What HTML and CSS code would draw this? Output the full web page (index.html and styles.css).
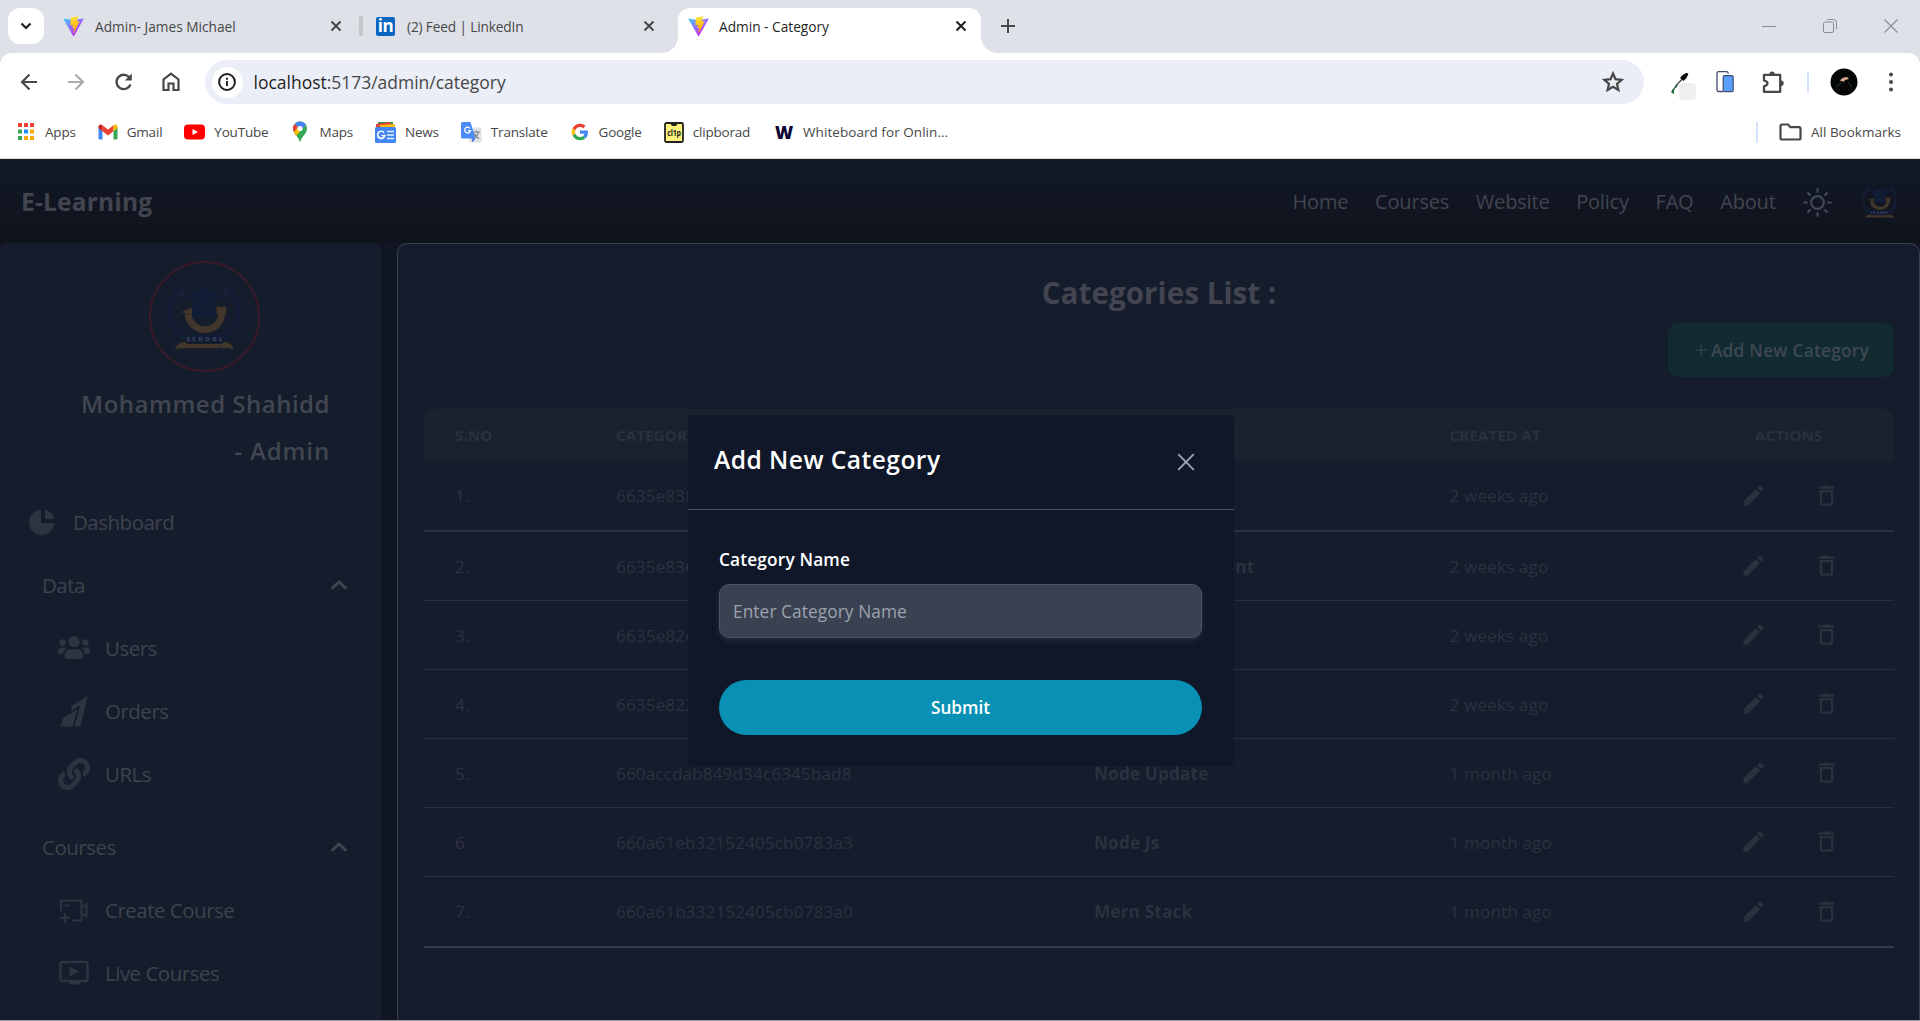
FILE: index.html
```html
<!DOCTYPE html>
<html lang="en">
<head>
<meta charset="utf-8">
<title>Admin - Category</title>
<link rel="stylesheet" href="styles.css">
</head>
<body>
<svg class="defs" width="0" height="0" aria-hidden="true">
  <defs>
    <linearGradient id="vg1" x1="6" y1="33" x2="235" y2="344" gradientUnits="userSpaceOnUse"><stop stop-color="#41d1ff"/><stop offset="1" stop-color="#bd34fe"/></linearGradient>
    <linearGradient id="vg2" x1="194" y1="9" x2="236" y2="293" gradientUnits="userSpaceOnUse"><stop stop-color="#ffea83"/><stop offset=".083" stop-color="#ffdd35"/><stop offset="1" stop-color="#ffa800"/></linearGradient>
  </defs>
  <symbol id="vite" viewBox="0 0 410 404">
    <path fill="url(#vg1)" d="M399.6 59.5L215.6 388.5c-3.8 6.8-13.5 6.8-17.4.1L10.6 59.6C6.400 52.300 12.700 43.400 21 44.900l184.200 32.900c1.200.2 2.400.2 3.500 0l180.300-32.900c8.300-1.500 14.600 7.300 10.600 14.600z"/>
    <path fill="url(#vg2)" d="M293 1.600L156.800 28.300c-2.200.4-3.900 2.300-4 4.600l-8.400 141.500c-.2 3.300 2.900 5.900 6.100 5.200l37.900-8.700c3.600-.8 6.800 2.300 6 5.900l-11.300 55.200c-.8 3.700 2.700 6.900 6.300 5.800l23.400-7.100c3.600-1.100 7.100 2.100 6.300 5.800L201.200 323c-1.100 5.400 6.100 8.400 9.100 3.700l2-3.100L323.200 102.400c1.900-3.700-1.300-7.900-5.400-7.100l-39 7.500c-3.700.7-6.800-2.700-5.800-6.300L298.500 8.300c1-3.600-2-7-5.500-6.700z"/>
  </symbol>
  <symbol id="close" viewBox="0 0 12 12"><path d="M1.500 1.500l9 9M10.500 1.500l-9 9" stroke="currentColor" stroke-width="2" fill="none"/></symbol>
  <symbol id="chev" viewBox="0 0 16 10"><path d="M1.500 8L8 1.800 14.500 8" stroke="currentColor" stroke-width="3" stroke-linecap="round" stroke-linejoin="round" fill="none"/></symbol>
  <symbol id="pencil" viewBox="0 0 24 24"><path fill="currentColor" d="M3 17.250V21h3.750L17.810 9.940l-3.750-3.750L3 17.250zM20.710 7.040a1 1 0 0 0 0-1.410l-2.340-2.340a1 1 0 0 0-1.410 0l-1.830 1.830 3.750 3.750 1.830-1.830z"/></symbol>
  <symbol id="trash" viewBox="0 0 24 24"><path fill="currentColor" d="M6 19c0 1.100.9 2 2 2h8c1.100 0 2-.9 2-2V7H6v12zM8 9h8v10H8V9zm7.500-5l-1-1h-5l-1 1H5v2h14V4z"/></symbol>
</svg>

<div class="browser">
  <div class="tabstrip">
    <div class="tabsearch"><svg width="12" height="8" viewBox="0 0 12 8"><path d="M1.500 1.500L6 6l4.500-4.500" stroke="#1f1f1f" stroke-width="2.200" fill="none"/></svg></div>
    <div class="tab tab-first"><svg width="21" height="21"><use href="#vite"/></svg><span>Admin- James Michael</span><svg class="x" width="12" height="12"><use href="#close"/></svg></div>
    <div class="tabsep"></div>
    <div class="tab tab-second"><div class="linkedin">in</div><span class="tight">(2) Feed | LinkedIn</span><svg class="x" width="12" height="12"><use href="#close"/></svg></div>
    <div class="tab tab-active"><svg width="21" height="21"><use href="#vite"/></svg><span>Admin - Category</span><svg class="x" width="12" height="12"><use href="#close"/></svg></div>
    <svg class="newtab" width="14" height="14" viewBox="0 0 14 14"><path d="M7 0v14M0 7h14" stroke="#474747" stroke-width="2"/></svg>
    <div class="winctl">
      <svg width="14" height="14" viewBox="0 0 14 14"><path d="M0 7.500h14" stroke="#888c91" stroke-width="1"/></svg>
      <svg width="14" height="14" viewBox="0 0 14 14"><path d="M.5 4.500a1.500 1.500 0 0 1 1.500-1.500h7a1.500 1.500 0 0 1 1.500 1.500v7.500a1.500 1.500 0 0 1-1.500 1.500H2A1.500 1.500 0 0 1 .5 12zM4 .5h6.500a3 3 0 0 1 3 3V10" fill="none" stroke="#888c91"/></svg>
      <svg width="14" height="14" viewBox="0 0 14 14"><path d="M.5.5l13 13M13.500.5l-13 13" stroke="#888c91" stroke-width="1.100"/></svg>
    </div>
  </div>
  <div class="toolbar">
    <svg class="tool" width="20" height="20" viewBox="0 0 20 20"><path d="M18 10H3M10.500 2.500L3 10l7.500 7.500" stroke="#474747" stroke-width="2.100" fill="none"/></svg>
    <svg class="tool" width="20" height="20" viewBox="0 0 20 20"><path d="M2 10h15M9.500 2.500L17 10l-7.500 7.500" stroke="#ababab" stroke-width="2.100" fill="none"/></svg>
    <svg class="tool" width="20" height="20" viewBox="0 0 20 20"><path d="M16.500 12.500A7.200 7.200 0 1 1 15.800 6" stroke="#474747" stroke-width="2.300" fill="none"/><path d="M17.800 1.500v7h-7z" fill="#474747"/></svg>
    <svg class="tool" width="20" height="20" viewBox="0 0 20 20"><path d="M2.500 18V7.500L10 1.700l7.500 5.800V18h-5v-6.500h-5V18z" stroke="#474747" stroke-width="2.200" fill="none"/></svg>
    <div class="omnibox">
      <div class="info"><svg width="18" height="18" viewBox="0 0 18 18"><circle cx="9" cy="9" r="7.900" fill="none" stroke="#1f1f1f" stroke-width="2"/><path d="M9 8v5M9 4.800v2" stroke="#1f1f1f" stroke-width="1.900"/></svg></div>
      <span class="url"><b>localhost</b>:5173/admin/category</span>
      <svg width="22" height="22" viewBox="0 0 22 22"><path d="M11 2.500l2.500 5.700 6.200.6-4.700 4.100 1.400 6.100L11 15.800 5.600 19 7 12.900 2.300 8.800l6.200-.6z" fill="none" stroke="#474747" stroke-width="2.200"/></svg>
    </div>
    <div class="exts">
      <svg width="28" height="28" viewBox="0 0 28 28"><path d="M2.500 20C5 14 9 10 12.500 7" stroke="#46514a" stroke-width="1.500" fill="none"/><path d="M1.500 19q2-4 2.500 0t-1.500 2.500-1-2.500zM5 14l3-1.500-1.500 3.500z" fill="#17713a"/><path d="M10 6l2-2.500 4-2.500q3-.5 2 2l-2 3.500-2.500 2.500z" fill="#0b0b0b"/><rect x="9" y="11" width="17" height="17" rx="4" fill="#efefef"/></svg>
      <svg width="18" height="22" viewBox="0 0 18 22"><path d="M1 2.500q0-1.800 1.500-1.800h8q1.500 0 2 2M1 2v17q0 1.500 1.500 1.500H7" fill="none" stroke="#414d70" stroke-width="1.300"/><rect x="7.200" y="4.700" width="10" height="16" rx="1.500" fill="#5a9ffb" stroke="#414d70" stroke-width="1.200"/></svg>
      <svg width="23" height="23" viewBox="0 0 23 23"><path d="M2 3.800h16.200v17H2v-5.500q3.500-1 3.500-3t-3.500-3z" fill="none" stroke="#474747" stroke-width="2.300" stroke-linejoin="round"/><path d="M7.500 3a2.600 2.600 0 0 1 5.200 0zM19 9.500a2.700 2.700 0 0 1 0 5.400z" fill="#474747"/></svg>
      <i class="vbar"></i>
      <svg width="28" height="28" viewBox="0 0 28 28"><circle cx="14" cy="14" r="13.500" fill="#050606"/><path d="M10 13c1-3 4-4 7-4l2 2-4 1-1 2-2-1z" fill="#d9a58b"/><path d="M6 19l6-5M22 19l-4-5" stroke="#17201e" stroke-width="2"/></svg>
      <svg width="4" height="20" viewBox="0 0 4 20"><circle cx="2" cy="2.500" r="2" fill="#474747"/><circle cx="2" cy="10" r="2" fill="#474747"/><circle cx="2" cy="17.500" r="2" fill="#474747"/></svg>
    </div>
  </div>
  <div class="bookmarks">
    <div class="bm"><svg width="20" height="20" viewBox="0 0 20 20"><path d="M2 1h4v4H2zM8 1h4v4H8zM14 1h4v4h-4z" fill="#ea4335"/><path d="M2 7.500h4v4H2z" fill="#34a853"/><path d="M8 7.500h4v4H8z" fill="#1a8cf0"/><path d="M14 7.500h4v4h-4zM8 14h4v4H8zM14 14h4v4h-4z" fill="#fbab05"/><path d="M2 14h4v4H2z" fill="#34a853"/></svg><span>Apps</span></div>
    <div class="bm"><svg width="20" height="20" viewBox="0 0 20 20"><path d="M.5 5v11.500a1 1 0 0 0 1 1h3V9z" fill="#4285f4"/><path d="M19.500 5v11.500a1 1 0 0 1-1 1h-3V9z" fill="#34a853"/><path d="M.5 5c0-2.500 2-3.300 4-1.800V9.500L.5 6z" fill="#c5221f"/><path d="M4.500 3.200L10 7.500l5.500-4.300v6L10 13.500 4.500 9.300z" fill="#ea4335"/><path d="M19.500 5c0-2.500-2-3.300-4-1.800v6L19.500 6z" fill="#fbbc04"/></svg><span>Gmail</span></div>
    <div class="bm"><svg width="21" height="20" viewBox="0 0 21 20"><rect y="2.500" width="21" height="15" rx="4" fill="#f00"/><path d="M8.500 7l5.500 3-5.500 3z" fill="#fff"/></svg><span>YouTube</span></div>
    <div class="bm"><svg width="20" height="22" viewBox="0 0 20 22"><path d="M10 .5a7 7 0 0 0-7 7c0 5.500 5.500 7.500 7 14 1.500-6.500 7-8.500 7-14a7 7 0 0 0-7-7z" fill="#34a853"/><path d="M10 .5a7 7 0 0 1 6 3.400L6 15 4.300 11.500A9 9 0 0 1 3 7.500a7 7 0 0 1 7-7z" fill="#fbbc04"/><path d="M4.600 3l3.500 3-4 5A7 7 0 0 1 4.600 3z" fill="#ea4335"/><path d="M4.600 3A7 7 0 0 1 16 3.900L12 8.500 8 6z" fill="#4285f4"/><circle cx="10" cy="7.500" r="2.600" fill="#fff"/></svg><span>Maps</span></div>
    <div class="bm"><svg width="21" height="21" viewBox="0 0 21 21"><path d="M3 0h15v6H3z" fill="#21974c"/><path d="M1 2l14-2 2 6H1z" fill="#ea4335"/><path d="M5 3l15-1v5H5z" fill="#fbbc04"/><rect y="5" width="21" height="16" rx="1.500" fill="#4285f4"/><path d="M12 9.500h7M12 13h7M12 16.500h7" stroke="#e8f0fe" stroke-width="1.700"/><path d="M9 10.500a3.600 3.600 0 1 0 .8 3H6.500" stroke="#fff" stroke-width="1.700" fill="none"/></svg><span>News</span></div>
    <div class="bm"><svg width="21" height="21" viewBox="0 0 21 21"><rect x="8" y="5.500" width="12.500" height="15" rx="1.500" fill="#dfe1e5"/><path d="M11 20.500l3.500-4-3-1z" fill="#3367d6"/><path d="M12 10h7M15.500 8.500V10M17.500 10c-.5 3-3 5-5 6M13.500 11.500c.5 2 2.500 4 4.500 5" stroke="#7c8186" stroke-width="1.200" fill="none"/><path d="M1.500 0h8l5 16.500h-13A1.500 1.500 0 0 1 0 15V1.500A1.500 1.500 0 0 1 1.500 0z" fill="#4c8bf5"/><path d="M9 6.300a2.900 2.900 0 1 0 .5 2.300H7" stroke="#fff" stroke-width="1.300" fill="none"/></svg><span>Translate</span></div>
    <div class="bm"><svg width="20" height="18" viewBox="-4 -2 56 52"><path fill="#EA4335" d="M24 9.500c3.540 0 6.710 1.220 9.210 3.600l6.850-6.850C35.900 2.380 30.470 0 24 0 14.620 0 6.510 5.380 2.560 13.220l7.980 6.190C12.430 13.720 17.740 9.500 24 9.500z"/><path fill="#4285F4" d="M46.980 24.550c0-1.570-.15-3.090-.38-4.550H24v9.020h12.940c-.58 2.960-2.260 5.480-4.780 7.180l7.730 6c4.510-4.180 7.090-10.360 7.090-17.650z"/><path fill="#FBBC05" d="M10.530 28.590c-.48-1.450-.76-2.990-.76-4.590s.27-3.140.76-4.590l-7.980-6.190C.92 16.460 0 20.120 0 24c0 3.880.92 7.540 2.560 10.780l7.970-6.190z"/><path fill="#34A853" d="M24 48c6.480 0 11.930-2.130 15.890-5.810l-7.730-6c-2.150 1.450-4.920 2.300-8.160 2.300-6.260 0-11.570-4.220-13.470-9.910l-7.980 6.190C6.510 42.620 14.620 48 24 48z"/></svg><span>Google</span></div>
    <div class="bm"><svg width="20" height="21" viewBox="0 0 20 21"><rect x="1" y="1" width="18" height="19" rx="1.500" fill="#fdf37c" stroke="#222" stroke-width="1.800"/><path d="M6 1h8l-2 3H8z" fill="#222"/><text x="3.300" y="14" font-size="8.500" font-weight="700" textLength="13.500" lengthAdjust="spacingAndGlyphs" fill="#222" font-family="Open Sans">cl1p</text></svg><span>clipborad</span></div>
    <div class="bm"><div class="wicon">W</div><span class="wide">Whiteboard for Onlin...</span></div>
    <div class="allbm"><i class="vbar"></i><svg width="23" height="18" viewBox="0 0 23 18"><path d="M1.500 15V3a1.500 1.500 0 0 1 1.500-1.500h6l2.500 2.700H20A1.500 1.500 0 0 1 21.500 5.700V15a1.500 1.500 0 0 1-1.500 1.500H3A1.500 1.500 0 0 1 1.500 15z" fill="none" stroke="#474747" stroke-width="2.200"/></svg><span>All Bookmarks</span></div>
  </div>
</div>

<div class="page">
  <header class="top">
    <div class="brand">E-Learning</div>
    <nav class="topnav">
      <a>Home</a><a>Courses</a><a>Website</a><a>Policy</a><a>FAQ</a><a>About</a>
      <svg class="sun" width="29" height="29" viewBox="0 0 29 29"><g fill="none" stroke="#42475a" stroke-width="2.200" stroke-linecap="round"><circle cx="14.500" cy="14.500" r="6.300"/><path d="M14.500 1.200v2.600M14.500 25.200v2.600M1.200 14.500h2.600M25.200 14.500h2.600M5.100 5.100l1.800 1.800M22.100 22.100l1.800 1.800M5.100 23.900l1.800-1.800M22.100 6.900l1.800-1.800"/></g></svg>
      <svg class="minilogo" width="33" height="38" viewBox="20 12 70 82" preserveAspectRatio="none"><use href="#school"/></svg>
    </nav>
  </header>
  <div class="body">
    <aside class="side">
      <div class="avatar"><svg width="106" height="106" viewBox="0 0 110 110"><g id="school">
        <path d="M33 24C14 38 16 66 34 78M77 24C96 38 94 66 76 78" fill="none" stroke="#131c32" stroke-width="7"/>
        <path d="M55 25L76 36 55 46 34 36zM42 41v16h25V41L55 47z" fill="#111c35"/>
        <path d="M44 47h23M44 51h23M44 55h23" stroke="#16223b" stroke-width="1"/>
        <path d="M38.500 52.500C40 75 74 75 73.500 50" fill="none" stroke="#43372c" stroke-width="7"/>
        <path d="M31 51l11.500-4.500v6.500zM68 45.500h10v7H68z" fill="#43372c"/>
        <path d="M36 75h39v7H36z" fill="#111c35"/>
        <path d="M25 90c1-5 5-7.500 10-8l3 2h35l3-2c5 .5 9 3 10 8l-3-1.500H28z" fill="#43372c"/>
        <text x="37" y="80.500" font-size="5.500" font-weight="700" textLength="37" fill="#485369" font-family="Open Sans">SCHOOL</text>
        <circle cx="31.500" cy="31" r="2.500" fill="none" stroke="#222d3e"/><circle cx="78.500" cy="31" r="2.500" fill="none" stroke="#222d3e"/>
        <path d="M14 48l14-13M35 25l14-12M80 29l8-7M62 48l14-13M83 74l12-11M61 97l13-12M20 90l18-18" stroke="#1a2333" stroke-width="1.500" stroke-dasharray="2 1"/>
      </g></svg></div>
      <div class="who">Mohammed Shahidd</div>
      <div class="who role">- Admin</div>
      <div class="menu">
        <div class="mi top-item"><svg width="26" height="26" viewBox="0 0 26 26"><path d="M12 .8V14h13.200A12.600 12.600 0 1 1 12 .8z" fill="currentColor"/><path d="M16 .8a11 11 0 0 1 9.300 9.300H16z" fill="currentColor"/></svg><span>Dashboard</span></div>
        <div class="mi group"><span>Data</span><svg width="16" height="10"><use href="#chev"/></svg></div>
        <div class="mi sub"><svg width="32" height="32" viewBox="0 0 640 512"><g fill="currentColor"><circle cx="320" cy="130" r="112"/><circle cx="92" cy="145" r="66"/><circle cx="548" cy="145" r="66"/><path d="M128 430c0-80 40-148 115-155q77 28 154 0c75 7 115 75 115 155q0 45-45 45H173q-45 0-45-45zM0 325c0-50 30-77 80-77h50q25 0 38 8-60 50-65 120H30q-30 0-30-30zM640 325c0-50-30-77-80-77h-50q-25 0-38 8 60 50 65 120h73q30 0 30-30z"/></g></svg><span>Users</span></div>
        <div class="mi sub"><svg width="32" height="32" viewBox="0 0 32 32"><path d="M29.800.8L22.500 31.500H16.500L21 12 12.500 16.500 14 10.500z" fill="currentColor"/><path d="M20 13.500L15 31.500H2.500L5 23z" fill="currentColor"/><path d="M22 11.500L11 18.500M20.500 13.500L15.500 32" stroke="#151c2b" stroke-width="1.500"/></svg><span>Orders</span></div>
        <div class="mi sub"><svg width="32" height="32" viewBox="0 0 512 512"><path fill="currentColor" d="M326.600 185.400c59.700 59.800 58.900 155.700.4 214.600-.1.100-.2.300-.4.400l-67.200 67.200c-59.300 59.300-155.700 59.300-215 0-59.300-59.300-59.300-155.700 0-215l37.100-37.100c9.800-9.800 26.800-3.300 27.300 10.600.6 17.700 3.800 35.500 9.700 52.700 2 5.800.6 12.300-3.800 16.600l-13.100 13.100c-28 28-28.900 73.700-1.200 102 28 28.600 74.100 28.700 102.300.5l67.200-67.200c28.200-28.200 28.100-73.800 0-101.800-3.700-3.700-7.400-6.600-10.300-8.600a16 16 0 0 1-7-12.600c-.4-10.600 3.300-21.500 11.700-29.800l21.100-21.100c5.500-5.500 14.200-6.200 20.600-1.700a152.500 152.500 0 0 1 20.500 17.200zM467.500 44.400c-59.300-59.300-155.700-59.300-215 0l-67.200 67.200c-.1.100-.3.300-.4.400-58.600 58.900-59.400 154.800.4 214.600a152.500 152.500 0 0 0 20.500 17.200c6.400 4.500 15.100 3.800 20.600-1.700l21.100-21.100c8.400-8.400 12.100-19.200 11.700-29.800a16 16 0 0 0-7-12.600c-2.900-2-6.600-4.900-10.300-8.600-28.100-28.100-28.200-73.600 0-101.800l67.200-67.200c28.200-28.200 74.300-28.100 102.300.5 27.800 28.300 26.900 73.900-1.200 102l-13.100 13.100c-4.400 4.400-5.800 10.800-3.800 16.600 5.900 17.200 9 35 9.700 52.700.5 13.900 17.500 20.400 27.300 10.600l37.100-37.100c59.300-59.300 59.300-155.700 0-215z"/></svg><span>URLs</span></div>
        <div class="mi group gap"><span>Courses</span><svg width="16" height="10"><use href="#chev"/></svg></div>
        <div class="mi sub"><svg width="32" height="32" viewBox="0 0 32 32"><path d="M3 17V6.500h20.500v20H14M23.500 14l5-4v13l-5-4M6.500 11.500h4M2 24h10M7 19.500V29" fill="none" stroke="currentColor" stroke-width="2"/></svg><span>Create Course</span></div>
        <div class="mi sub"><svg width="32" height="32" viewBox="0 0 32 32"><rect x="2.500" y="5" width="27" height="19" rx="2" fill="none" stroke="currentColor" stroke-width="2.400"/><path d="M11.500 9.500l9.500 5-9.500 5zM11 24h11v3.500H11z" fill="currentColor"/></svg><span>Live Courses</span></div>
      </div>
    </aside>
    <main class="panel">
      <h1>Categories List :</h1>
      <button class="add"><svg width="12" height="12" viewBox="0 0 12 12"><path d="M6 .5v11M.5 6h11" stroke="currentColor" stroke-width="1.100"/></svg>Add New Category</button>
      <div class="table">
        <div class="row head"><span>S.NO</span><span>CATEGORY ID</span><span></span><span>CREATED AT</span><span class="act-h">ACTIONS</span></div>
        <div class="row first"><span class="no">1.</span><span>6635e83f</span><b></b><span>2 weeks ago</span><span class="act"><svg><use href="#pencil"/></svg><svg><use href="#trash"/></svg></span></div>
        <div class="row"><span class="no">2.</span><span>6635e836</span><b class="dev">Web Development</b><span>2 weeks ago</span><span class="act"><svg><use href="#pencil"/></svg><svg><use href="#trash"/></svg></span></div>
        <div class="row"><span class="no">3.</span><span>6635e82c</span><b></b><span>2 weeks ago</span><span class="act"><svg><use href="#pencil"/></svg><svg><use href="#trash"/></svg></span></div>
        <div class="row"><span class="no">4.</span><span>6635e822</span><b></b><span>2 weeks ago</span><span class="act"><svg><use href="#pencil"/></svg><svg><use href="#trash"/></svg></span></div>
        <div class="row"><span class="no">5.</span><span>660accdab849d34c6345bad8</span><b>Node Update</b><span>1 month ago</span><span class="act"><svg><use href="#pencil"/></svg><svg><use href="#trash"/></svg></span></div>
        <div class="row"><span class="no">6.</span><span>660a61eb32152405cb0783a3</span><b>Node Js</b><span>1 month ago</span><span class="act"><svg><use href="#pencil"/></svg><svg><use href="#trash"/></svg></span></div>
        <div class="row last"><span class="no">7.</span><span>660a61b332152405cb0783a0</span><b>Mern Stack</b><span>1 month ago</span><span class="act"><svg><use href="#pencil"/></svg><svg><use href="#trash"/></svg></span></div>
      </div>
    </main>
  </div>
  <div class="modal">
    <div class="modal-head"><h2>Add New Category</h2><svg width="18" height="18" viewBox="0 0 18 18"><path d="M1.700 1.700l14.600 14.600M16.300 1.700L1.700 16.300" stroke="#9ca3af" stroke-width="1.900" stroke-linecap="round"/></svg></div>
    <div class="modal-body">
      <label for="cat">Category Name</label>
      <input id="cat" type="text" placeholder="Enter Category Name">
      <button class="submit">Submit</button>
    </div>
  </div>
</div>
</body>
</html>
```
FILE: styles.css
```css
* { box-sizing: border-box; }
body { margin: 0; width: 1920px; height: 1021px; overflow: hidden; display: flex; flex-direction: column; font-family: "Open Sans", "Noto Sans", sans-serif; background: #fff; }
.defs { position: absolute; }
svg { display: block; flex: none; }
span, a, b { white-space: nowrap; }

/* browser frame */
.browser { height: 159px; flex: none; background: #dee1e8; border-bottom: 1px solid #dcdcd8; display: flex; flex-direction: column; }
.tabstrip { height: 53px; display: flex; padding-top: 8px; padding-left: 8px; }
.tabsearch { width: 36px; height: 36px; border-radius: 12px; background: #fff; display: flex; align-items: center; justify-content: center; }
.tab { height: 36px; display: flex; align-items: center; gap: 11px; font-size: 13.7px; color: #474747; }
.tab .x { margin-left: auto; color: #474747; }
.tab-first { width: 279px; margin-left: 19px; }
.tabsep { width: 4px; height: 20px; border-radius: 2px; background: #c5c6c8; margin: 8px 13px 0 17px; }
.tab-second { width: 279px; gap: 12px; }
.tight { letter-spacing: -.15px; }
.linkedin { width: 19px; height: 19px; border-radius: 2px; background: #0a66c2; color: #fff; font-weight: 700; font-size: 17px; line-height: 17px; text-align: center; letter-spacing: -.5px; }
.tab-active { position: relative; width: 303px; height: 45px; margin-left: 23px; padding: 0 14px 9px 10px; gap: 10px; border-radius: 12px 12px 0 0; background: #fff; color: #1f1f1f; }
.tab-active .x { color: #1f1f1f; }
.tab-active::before, .tab-active::after { content: ""; position: absolute; bottom: 0; width: 16px; height: 16px; }
.tab-active::before { left: -16px; background: radial-gradient(circle at 0 0, transparent 15.500px, #fff 16px); }
.tab-active::after { right: -16px; background: radial-gradient(circle at 100% 0, transparent 15.500px, #fff 16px); }
.newtab { margin: 11px 0 0 20px; }
.winctl { margin-left: auto; display: flex; gap: 47px; padding: 11px 22px 0 0; }
.toolbar { height: 58px; background: #fff; border-radius: 12px 12px 0 0; display: flex; align-items: center; padding-left: 19px; }
.tool { margin-right: 27.400px; }
.omnibox { width: 1439px; height: 44px; margin-left: -4px; border-radius: 22px; background: #ebeef7; display: flex; align-items: center; padding: 0 20px 0 7px; }
.info { width: 31px; height: 31px; border-radius: 50%; background: #fff; display: flex; align-items: center; justify-content: center; }
.url { flex: 1; margin-left: 11px; font-size: 17.500px; letter-spacing: -.02px; color: #474747; line-height: 40px; }
.url b { font-weight: 400; color: #1f1f1f; }
.exts { display: flex; align-items: center; padding-left: 26px; }
.exts svg:first-child { margin-top: 7px; }
.exts svg:nth-child(2) { margin-left: 18px; }
.exts svg:nth-child(3) { margin-left: 28px; }
.vbar { width: 2px; height: 21px; background: #d3e3fd; }
.exts .vbar { margin: 0 21px 0 22px; }
.exts svg:last-child { margin-left: 31px; }
.bookmarks { flex: 1; background: #fff; display: flex; align-items: center; gap: 22px; padding: 0 19px 5px 16px; font-size: 13.500px; color: #474747; letter-spacing: -.2px; }
.bm { display: flex; align-items: center; gap: 9px; height: 22px; }
.wicon { width: 20px; font-size: 17.500px; font-weight: 800; line-height: 20px; color: #0b0434; text-align: center; letter-spacing: 0; margin-left: 2px; }
.wide { letter-spacing: .05px; }
.allbm { margin-left: auto; display: flex; align-items: center; letter-spacing: 0; }
.allbm svg { margin: 0 9px 0 21px; }

/* application */
.page { position: relative; flex: 1; background: #101624; overflow: hidden; border-bottom: 1px solid #9b9ea4; }
.top { height: 84px; display: flex; align-items: center; justify-content: space-between; padding: 0 24px 0 21px; background: linear-gradient(#111827, #10131c); color: #42454f; }
.brand { font-size: 24.500px; font-weight: 700; letter-spacing: .2px; }
.topnav { display: flex; align-items: center; font-size: 20px; letter-spacing: -.18px; gap: 26.700px; }
.topnav .sun { margin: 3px 0 0 1px; }
.topnav .minilogo { margin-left: 4px; }
.body { display: flex; height: 777px; gap: 16px; }
.side { width: 381px; background: #151c2b; border-radius: 8px 8px 0 0; padding-top: 18px; color: #3e434e; }
.avatar { width: 111px; height: 111px; margin: 0 0 8px 149px; border: 2.500px solid #3a1a26; border-radius: 50%; }
.who { font-size: 24px; font-weight: 600; line-height: 47px; letter-spacing: .5px; text-align: right; padding-right: 51px; color: #424651; }
.role { letter-spacing: .85px; }
.menu { margin-top: 16px; font-size: 20.500px; letter-spacing: -.5px; }
.mi { height: 63px; display: flex; align-items: center; }
.mi svg { color: #2d3340; }
.top-item { padding-left: 29px; gap: 18px; }
.group { padding: 0 34px 0 42px; justify-content: space-between; }
.group svg { color: #3e434e; }
.gap { margin-top: 10px; }
.sub { padding-left: 58px; gap: 15px; }
.panel { flex: none; width: 1523px; height: 800px; background: #151c2b; border: 1px solid #3a414e; border-bottom: 0; border-radius: 10px 10px 0 0; padding: 29px 25px 0 26px; display: flex; flex-direction: column; }
.panel h1 { margin: 0; font-size: 29.700px; font-weight: 700; line-height: 40px; text-align: center; color: #42454f; }
.add { font: 600 17.300px "Open Sans", sans-serif; letter-spacing: .25px; align-self: flex-end; width: 226px; height: 54px; margin: 10px 0 32px; border: 0; border-radius: 10px; background: #112b30; color: #3e4852; display: flex; align-items: center; justify-content: center; gap: 4px; padding: 0 0 0 2px; }
.row { height: 69.100px; display: grid; grid-template-columns: 161px 478px 355.600px 290px 1fr; align-items: center; padding-left: 31px; border-bottom: 1px solid #2a303d; font-size: 17.200px; letter-spacing: .08px; color: #2a3240; }
.row b { color: #2a313f; letter-spacing: .15px; }
.row .dev { letter-spacing: .2px; }
.row .no { color: #302f4b; }
.row.head { height: 52px; border: 0; border-radius: 10px 10px 0 0; background: #1a212f; font-size: 15px; font-weight: 700; letter-spacing: .2px; color: #29313f; }
.row.first { height: 71px; border-bottom-width: 2px; }
.row.last { height: 71px; border-bottom: 2px solid #353b48; }
.act-h { padding-left: 15.500px; }
.act { display: flex; gap: 46px; margin-top: -1px; }
.act svg { width: 27px; height: 27px; color: #2b313e; }

/* dialog */
.modal { position: absolute; left: 688px; top: 256px; width: 546px; height: 351px; border-radius: 5px; background: #0f1728; }
.modal-head { height: 95px; padding: 0 39px 0 26px; display: flex; align-items: center; justify-content: space-between; border-bottom: 1px solid #4b5563; }
.modal-head h2 { margin: 0; padding-bottom: 5px; font-size: 24.600px; font-weight: 600; letter-spacing: .45px; color: #fff; }
.modal-body { padding: 38px 32px 0 31px; display: flex; flex-direction: column; }
.modal-body label { font-size: 17.300px; font-weight: 600; letter-spacing: .15px; line-height: 24px; color: #fff; }
.modal-body input { font: 17.300px "Open Sans", sans-serif; height: 54px; margin: 12px 0 42px; padding: 0 13px; border: 1px solid #4b5563; border-radius: 10px; background: #3a4150; box-shadow: 0 3px 6px rgba(75, 85, 99, .35); letter-spacing: .08px; color: #fff; }
.modal-body input::placeholder { color: #9ca3af; opacity: 1; }
.submit { font: 600 17.200px "Open Sans", sans-serif; height: 55px; border: 0; border-radius: 28px; background: #0891b5; color: #fff; }
```
